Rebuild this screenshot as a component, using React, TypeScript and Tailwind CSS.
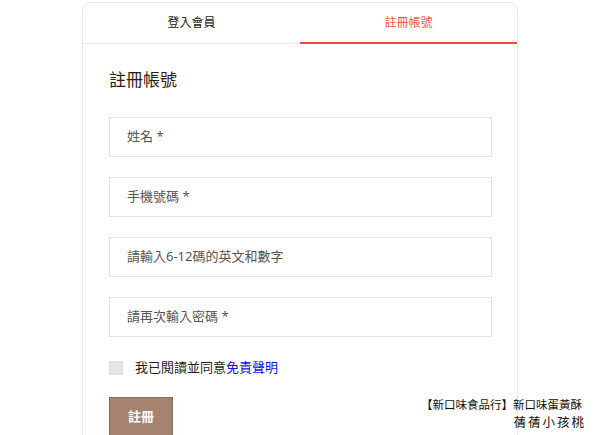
import React from 'react';

const fields = ['姓名 *', '手機號碼 *', '請輸入6-12碼的英文和數字', '請再次輸入密碼 *'];

const App: React.FC = () => {
  return (
    <div
      className="relative w-[600px] h-[435px] overflow-hidden bg-white"
      style={{ fontFamily: '"Noto Sans", "Noto Sans CJK TC", sans-serif' }}
    >
      <div className="ml-[82px] mt-[2px] w-[436px] h-[460px] border border-[#e8e8e8] rounded-t-[9px]">
        {/* Tabs */}
        <div className="grid grid-cols-2 h-[41px]">
          <div className="flex items-center justify-center border-b border-[#ececec] text-[12px] text-[#2b2118]">
            登入會員
          </div>
          <div className="flex items-center justify-center border-b-2 border-[#e0523f] text-[12px] text-[#ef5b4a]">
            註冊帳號
          </div>
        </div>

        {/* Form */}
        <div className="px-[26px] pt-[24px]">
          <h2 className="text-[17px] leading-[24px] text-[#2a1d12]">註冊帳號</h2>

          <div className="mt-[25px] flex flex-col gap-[20px]">
            {fields.map((f) => (
              <div
                key={f}
                className="h-[40px] w-[383px] border border-[#e3e3e3] flex items-center pl-[17px] text-[13px] text-[#555]"
              >
                {f}
              </div>
            ))}
          </div>

          <div className="mt-[22px] flex items-center h-[18px]">
            <span className="w-[14px] h-[14px] bg-[#e6e6e6] border border-[#dedede]" />
            <span className="ml-[12px] text-[13px] text-[#2a1d12]">
              我已閱讀並同意<span className="text-[#1010ee]">免責聲明</span>
            </span>
          </div>

          <button className="mt-[20px] w-[64px] h-[40px] bg-[#a68371] border border-[#8e6e5e] text-white text-[13px] font-bold">
            註冊
          </button>
        </div>
      </div>

      {/* Watermark */}
      <div
        className="absolute right-[18px] top-[396px] text-right text-[11.5px] leading-[17px] text-[#111]"
        style={{ fontFamily: '"Noto Sans CJK TC", sans-serif' }}
      >
        <div>【新口味食品行】新口味蛋黃酥</div>
        <div className="-mr-[4px] text-[12.5px] tracking-[2px]">蒨蒨小孩桃</div>
      </div>
    </div>
  );
};

export default App;
